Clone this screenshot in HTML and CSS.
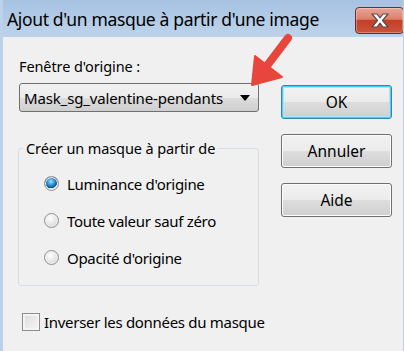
FILE: index.html
```html
<!DOCTYPE html>
<html lang="fr">
<head>
    <meta charset="UTF-8">
    <title>Ajout d'un masque à partir d'une image</title>
    <link rel="stylesheet" href="styles.css">
</head>
<body>
    <div class="window">
        <div class="titlebar">
            <span class="title">Ajout d'un masque à partir d'une image</span>
            <button class="close-btn" aria-label="Fermer">
                <svg width="22" height="17" viewBox="0 0 22 17">
                    <path d="M3 2 L8 2 L11 5.8 L14 2 L19 2 L13.5 8.5 L19 15 L14 15 L11 11.2 L8 15 L3 15 L8.5 8.5 Z"
                          fill="#ffffff" stroke="#5a4a4a" stroke-width="1.2" stroke-linejoin="round"/>
                </svg>
            </button>
        </div>

        <div class="client">
            <div class="main">
                <div class="left">
                    <div class="field-label">Fenêtre d'origine :</div>
                    <div class="combo">
                        <span class="combo-text">Mask_sg_valentine-pendants</span>
                        <span class="combo-arrow"></span>
                    </div>

                    <fieldset class="group">
                        <legend>Créer un masque à partir de</legend>
                        <label class="radio-row">
                            <input type="radio" name="src" checked>
                            <span>Luminance d'origine</span>
                        </label>
                        <label class="radio-row">
                            <input type="radio" name="src">
                            <span>Toute valeur sauf zéro</span>
                        </label>
                        <label class="radio-row">
                            <input type="radio" name="src">
                            <span>Opacité d'origine</span>
                        </label>
                    </fieldset>
                </div>

                <div class="buttons">
                    <button class="btn default">OK</button>
                    <button class="btn">Annuler</button>
                    <button class="btn">Aide</button>
                </div>
            </div>

            <label class="check-row">
                <input type="checkbox">
                <span>Inverser les données du masque</span>
            </label>
        </div>

        <!-- red annotation arrow drawn over the dialog -->
        <svg class="annot" width="404" height="351" viewBox="0 0 404 351">
            <line x1="288" y1="38" x2="266" y2="67" stroke="#e8463d" stroke-width="8" stroke-linecap="round"/>
            <polygon points="252,85 255,56 282,77" fill="#e8463d" stroke="#e8463d" stroke-width="2" stroke-linejoin="round"/>
        </svg>
    </div>
</body>
</html>
```

FILE: styles.css
```css
* {
    box-sizing: border-box;
}
body {
    margin: 0;
    font-family: "Noto Sans", "Open Sans", sans-serif;
    color: #000;
    background: #f0f0f0;
}
.window {
    position: relative;
    width: 404px;
    height: 351px;
    background: #f0f0f0;
    border-left: 3px solid #bcd2ea;
    border-right: 1px solid #bcd2ea;
    overflow: hidden;
}
.titlebar {
    height: 37px;
    margin-left: -3px;
    margin-right: -1px;
    background: linear-gradient(#a7c2e2, #bdd3eb);
    display: flex;
    align-items: flex-start;
    justify-content: space-between;
}
.title {
    font-size: 17.5px;
    margin: 7px 0 0 7px;
    letter-spacing: -0.35px;
    white-space: nowrap;
}
.close-btn {
    margin: 7px 0 0 0;
    width: 49px;
    height: 27px;
    padding: 0;
    border: 1px solid #6e2b2b;
    border-radius: 4px;
    background: linear-gradient(#e9a597 0%, #dc7f6c 45%, #c43f28 50%, #c9553b 100%);
    display: flex;
    align-items: center;
    justify-content: center;
    box-shadow: inset 0 0 0 1px rgba(255, 255, 255, 0.3);
}
.client {
    padding: 19px 0 0 16px;
}
.main {
    display: flex;
    gap: 22px;
}
.left {
    width: 240px;
}
.field-label {
    font-size: 14.5px;
    line-height: 20px;
    letter-spacing: -0.1px;
}
.combo {
    margin-top: 7px;
    height: 29px;
    border: 1px solid #707070;
    border-radius: 3px;
    background: linear-gradient(#f2f2f2 0%, #ebebeb 50%, #dddddd 51%, #cfcfcf 100%);
    display: flex;
    align-items: center;
    justify-content: space-between;
    padding: 0 8px 0 4px;
}
.combo-text {
    font-size: 15px;
    letter-spacing: -0.15px;
    white-space: nowrap;
}
.combo-arrow {
    width: 0;
    height: 0;
    border-left: 5px solid transparent;
    border-right: 5px solid transparent;
    border-top: 6px solid #000;
}
.group {
    margin: 26px 0 0 -1px;
    padding: 7px 0 9px 25px;
    width: 241px;
    border: 1px solid #d5dfe5;
    border-radius: 3px;
}
.group legend {
    font-size: 14.5px;
    line-height: 20px;
    letter-spacing: -0.1px;
    padding: 0 3px;
    margin-left: -21px;
}
.radio-row {
    display: flex;
    align-items: center;
    gap: 8px;
    height: 37px;
    font-size: 15px;
    letter-spacing: -0.3px;
}
.radio-row input {
    appearance: none;
    margin: 0;
    width: 15px;
    height: 15px;
    border-radius: 50%;
    border: 1px solid #8e8f8f;
    background: radial-gradient(circle at 40% 35%, #ffffff, #dcdcdc 70%, #c8c8c8);
    box-shadow: inset 0 0 0 1px #f4f4f4;
}
.radio-row input:checked {
    background: radial-gradient(circle at 45% 35%, #9fe0ff 0, #2a8fd0 35%, #0c4f83 58%, #d9d9d9 62%, #f4f4f4 100%);
}
.buttons {
    margin-top: 29px;
    display: flex;
    flex-direction: column;
    gap: 15px;
}
.btn {
    width: 111px;
    height: 34px;
    font-family: inherit;
    font-size: 15.5px;
    color: #000;
    border: 1px solid #707070;
    border-radius: 3px;
    background: linear-gradient(#f2f2f2 0%, #ebebeb 50%, #dddddd 51%, #cfcfcf 100%);
    box-shadow: inset 0 0 0 1px #fcfcfc;
}
.btn.default {
    border-color: #3c7fb1;
    box-shadow: inset 0 0 0 1px #48d0f6, inset 0 0 0 2px #a6e6fb;
}
.check-row {
    margin-top: 26px;
    display: flex;
    align-items: center;
    gap: 4px;
    font-size: 15px;
    letter-spacing: -0.3px;
}
.check-row input {
    appearance: none;
    margin: 0 0 0 3px;
    width: 18px;
    height: 18px;
    border: 1px solid #8e8f8f;
    background: linear-gradient(135deg, #dcdcdc, #f6f6f6);
    box-shadow: inset 0 0 0 2px #f4f4f4;
}
.annot {
    position: absolute;
    left: -3px;
    top: 0;
    pointer-events: none;
}
```
